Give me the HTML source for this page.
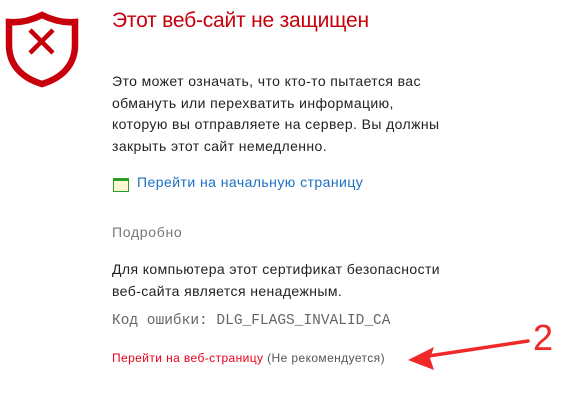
<!DOCTYPE html>
<html><head><meta charset="utf-8"><style>
body{margin:0;width:580px;height:404px;background:#fff;position:relative;overflow:hidden;font-family:"Liberation Sans",sans-serif}
.a{position:absolute;white-space:nowrap}
.t{font-size:14px;color:#222;line-height:21.5px;letter-spacing:0.4px}
</style></head><body>
<svg class="a" style="left:0;top:0" width="90" height="95" viewBox="0 0 90 95">
<path d="M42 15 C30 21 20 23 9 22 L9 45 C9 65 22 78 42 84 C62 78 75 65 75 45 L75 22 C64 23 54 21 42 15 Z" fill="none" stroke="#c8000c" stroke-width="6.5" stroke-linejoin="miter"/>
<path d="M30 30 L53 53 M53 30 L30 53" stroke="#c8000c" stroke-width="4.5"/>
</svg>
<div class="a" style="left:112px;top:9px;font-size:21px;letter-spacing:-0.2px;color:#c8000c">Этот веб-сайт не защищен</div>
<div class="a t" style="left:112px;top:71px">Это может означать, что кто-то пытается вас<br>обмануть или перехватить информацию,<br>которую вы отправляете на сервер. Вы должны<br>закрыть этот сайт немедленно.</div>
<div class="a" style="left:113px;top:178px;width:14px;height:10px;border:1.5px solid #2a9e2a;border-top:3px solid #2a9e2a;background:#fff7d0"></div>
<div class="a" style="left:137px;top:174px;font-size:14px;letter-spacing:0.45px;color:#1a6fc4">Перейти на начальную страницу</div>
<div class="a" style="left:112px;top:224px;font-size:14px;letter-spacing:0.7px;color:#777">Подробно</div>
<div class="a t" style="left:112px;top:259px">Для компьютера этот сертификат безопасности<br>веб-сайта является ненадежным.</div>
<div class="a" style="left:112px;top:313px;font-family:'Liberation Mono',monospace;font-size:14.5px;color:#666">Код ошибки: DLG_FLAGS_INVALID_CA</div>
<div class="a" style="left:112px;top:351px;font-size:12px;letter-spacing:0.4px;color:#e8001c">Перейти на веб-страницу <span style="color:#555">(Не рекомендуется)</span></div>
<svg class="a" style="left:400px;top:325px" width="180" height="50">
<path d="M128 16 L22 32" stroke="#f02828" stroke-width="3.5" stroke-linecap="round"/>
<path d="M8 35 L34 22 L30 33 L34 45 Z" fill="#f02828"/>
</svg>
<div class="a" style="left:533px;top:317px;font-size:36px;color:#f02828">2</div>
</body></html>
